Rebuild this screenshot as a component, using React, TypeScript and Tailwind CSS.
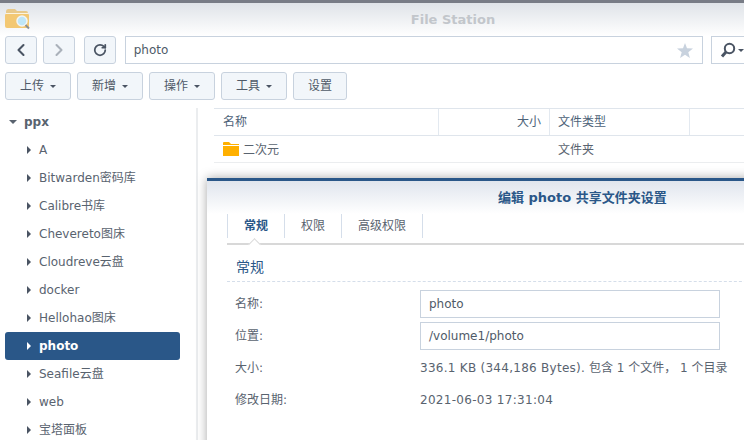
import { ChevronLeft, ChevronRight, RotateCw } from 'lucide-react';

const tree = ['A', 'Bitwarden密码库', 'Calibre书库', 'Chevereto图床', 'Cloudreve云盘', 'docker', 'Hellohao图床', 'photo', 'Seafile云盘', 'web', '宝塔面板'];

function FolderSearchIcon() {
  return (
    <svg width="25" height="22" viewBox="0 0 25 22">
      <path d="M1 3.5 Q1 1 3 1 H10 L12 3 H21 Q23 3 23 5 V8 H1 Z" fill="#e8c98a" />
      <path d="M1 5 H23 V7 H1 Z" fill="#fbf3df" />
      <path d="M0 7 Q0 6 1 6 H23 Q24 6 24 7 V19 Q24 20 23 20 H2 Q0 20 0 18 Z" fill="#f3c873" />
      <circle cx="17" cy="13" r="5" fill="#bfe6f7" stroke="#f2f4f5" strokeWidth="1.5" />
      <path d="M20.5 17 L24 20.5" stroke="#8b8f94" strokeWidth="2" />
    </svg>
  );
}

function Caret({ className = 'border-t-[#4a5463]' }: { className?: string }) {
  return <span className={`inline-block w-0 h-0 border-x-[3px] border-x-transparent border-t-[3px] ${className}`} />;
}

function ToolButton({ label, menu = true }: { label: string; menu?: boolean }) {
  return (
    <button className={`h-[28px] flex items-center justify-center gap-[6px] rounded-[3px] border border-[#c8d2de] bg-[#f2f6fa] text-[#4f5a68] text-[12px] ${menu ? 'w-[66px]' : 'w-[54px]'}`}>
      {label}
      {menu && <Caret />}
    </button>
  );
}

function NavButton({ children }: { children: React.ReactNode }) {
  return (
    <button className="w-[32px] h-[28px] flex items-center justify-center rounded-[3px] border border-[#c8d2de] bg-[#f2f6fa]">
      {children}
    </button>
  );
}

function TreeRow({ label }: { label: string }) {
  const active = label === 'photo';
  return (
    <div className={`h-[28px] w-[175px] ml-[5px] flex items-center rounded-[3px] pl-[22px] gap-[8px] text-[12px] ${active ? 'bg-[#2a5788] text-white font-bold' : 'text-[#59636f]'}`}>
      <span className={`w-0 h-0 border-y-[4px] border-y-transparent border-l-[4px] ${active ? 'border-l-white' : 'border-l-[#4a5463]'}`} />
      <span className="whitespace-nowrap">{label}</span>
    </div>
  );
}

function Field({ label, children }: { label: string; children: React.ReactNode }) {
  return (
    <div className="flex items-center h-[28px]">
      <span className="w-[185px] text-[#59636f]">{label}</span>
      {children}
    </div>
  );
}

function TextBox({ value }: { value: string }) {
  return <div className="w-[300px] h-[28px] flex items-center px-[8px] border border-[#c8d2de] bg-white text-[#4f5a68]">{value}</div>;
}

export default function App() {
  return (
    <div className="relative w-[744px] h-[440px] overflow-hidden bg-white font-['DejaVu_Sans','Noto_Sans_CJK_SC',sans-serif] text-[12px]">
      <div className="h-[3px] bg-[#787c86]" />
      <div className="relative h-[33px] bg-gradient-to-b from-[#dfe3e8] to-white flex items-center justify-center pl-[162px]">
        <span className="absolute left-[5px] top-[5px]"><FolderSearchIcon /></span>
        <span className="font-bold text-[13px] text-[#c2c6cb]">File Station</span>
      </div>

      <div className="flex items-center pl-[5px] h-[28px]">
        <NavButton><ChevronLeft size={20} strokeWidth={2.5} className="text-[#4a5463]" /></NavButton>
        <span className="w-[6px]" />
        <NavButton><ChevronRight size={20} strokeWidth={2.5} className="text-[#aab1ba]" /></NavButton>
        <span className="w-[9px]" />
        <NavButton><RotateCw size={14} strokeWidth={3} className="text-[#4a5463]" /></NavButton>
        <div className="ml-[9px] w-[580px] h-[28px] flex items-center justify-between pl-[8px] pr-[9px] border border-[#c8d2de] bg-white text-[#4f5a68]">
          photo
          <svg width="16" height="15" viewBox="0 0 16 15" fill="#c8d2de">
            <path d="M8 0 L10 5.3 L16 5.6 L11.3 9.2 L12.9 15 L8 11.7 L3.1 15 L4.7 9.2 L0 5.6 L6 5.3 Z" />
          </svg>
        </div>
        <div className="ml-[8px] flex-1 h-[28px] flex items-center gap-[2px] pl-[8px] border border-r-0 border-[#c8d2de] bg-white">
          <svg width="16" height="16" viewBox="0 0 16 16" fill="none" stroke="#4a5463">
            <circle cx="9.5" cy="6.5" r="4.7" strokeWidth="2" />
            <path d="M6 10 L2 14.5" strokeWidth="3" />
          </svg>
          <Caret />
        </div>
      </div>

      <div className="flex gap-[6px] pl-[5px] mt-[8px]">
        <ToolButton label="上传" />
        <ToolButton label="新增" />
        <ToolButton label="操作" />
        <ToolButton label="工具" />
        <ToolButton label="设置" menu={false} />
      </div>

      <div className="flex mt-[8px]">
        <div className="w-[198px] h-[332px] shrink-0 border-r-2 border-[#ebedef]">
          <div className="h-[28px] flex items-center pl-[9px] gap-[7px] font-bold text-[#59636f]">
            <Caret className="border-t-[#59636f] !border-x-[4px] !border-t-[4px]" />
            ppx
          </div>
          {tree.map((t) => <TreeRow key={t} label={t} />)}
        </div>

        <div className="ml-[16px] flex-1">
          <div className="flex h-[28px] border-y border-[#dfe5ec] text-[#4d6278]">
            <div className="w-[225px] pl-[9px] flex items-center border-r border-[#e3e9f0]">名称</div>
            <div className="w-[111px] pr-[8px] flex items-center justify-end border-r border-[#e3e9f0]">大小</div>
            <div className="w-[140px] pl-[8px] flex items-center border-r border-[#e3e9f0]">文件类型</div>
          </div>
          <div className="flex h-[27px] border-b border-[#ebedef] text-[#59636f] items-center">
            <div className="w-[336px] pl-[9px] flex items-center gap-[4px]">
              <svg width="16" height="14" viewBox="0 0 16 14">
                <path d="M0 1 Q0 0 1 0 H6 L8 2 H16 V3 H0 Z" fill="#ffb000" />
                <path d="M0 4 H16 V14 H0 Z" fill="#ffb000" />
              </svg>
              <span className="pt-[1px]">二次元</span>
            </div>
            <div className="pl-[8px] pt-[1px]">文件夹</div>
          </div>
        </div>
      </div>

      {/* dialog window floating over the file list */}
      <div className="absolute left-[207px] top-[178px] w-[560px] h-[280px] bg-white border-t-[3px] border-[#2a5788] shadow-[0_0_10px_rgba(0,0,0,0.35)]">
        <div className="h-[33px] bg-gradient-to-b from-[#e0e5ed] to-white flex items-center pl-[291px] font-bold text-[13px] text-[#2a5788]">
          编辑 photo 共享文件夹设置
        </div>
        <div className="relative ml-[20px] h-[31px] flex border-b-2 border-[#d8d8d8] text-[#59636f]">
          <div className="h-[24px] flex items-center border-x border-[#d5deea] w-[58px] justify-center font-bold text-[#2a5788]">常规</div>
          <div className="h-[24px] flex items-center border-r border-[#d5deea] w-[57px] justify-center">权限</div>
          <div className="h-[24px] flex items-center border-r border-[#d5deea] w-[81px] justify-center">高级权限</div>
          <span className="absolute left-[23px] bottom-[-2px] w-[9px] h-[9px] rotate-45 bg-white border-l border-t border-[#d8d8d8] translate-y-[4px]" />
        </div>
        <div className="ml-[20px] mt-[12px] h-[25px] pl-[9px] border-b border-dashed border-[#d5deea] text-[14px] text-[#2a5788]">常规</div>
        <div className="ml-[28px] mt-[8px] flex flex-col gap-[4px]">
          <Field label="名称:"><TextBox value="photo" /></Field>
          <Field label="位置:"><TextBox value="/volume1/photo" /></Field>
          <Field label="大小:">
            <span className="text-[#59636f] whitespace-nowrap">
              <span className="tracking-[0.27px]">336.1 KB (344,186 Bytes).</span> 包含 1 个文件， 1 个目录
            </span>
          </Field>
          <Field label="修改日期:"><span className="text-[#59636f] tracking-[0.3px]">2021-06-03 17:31:04</span></Field>
        </div>
      </div>
    </div>
  );
}
